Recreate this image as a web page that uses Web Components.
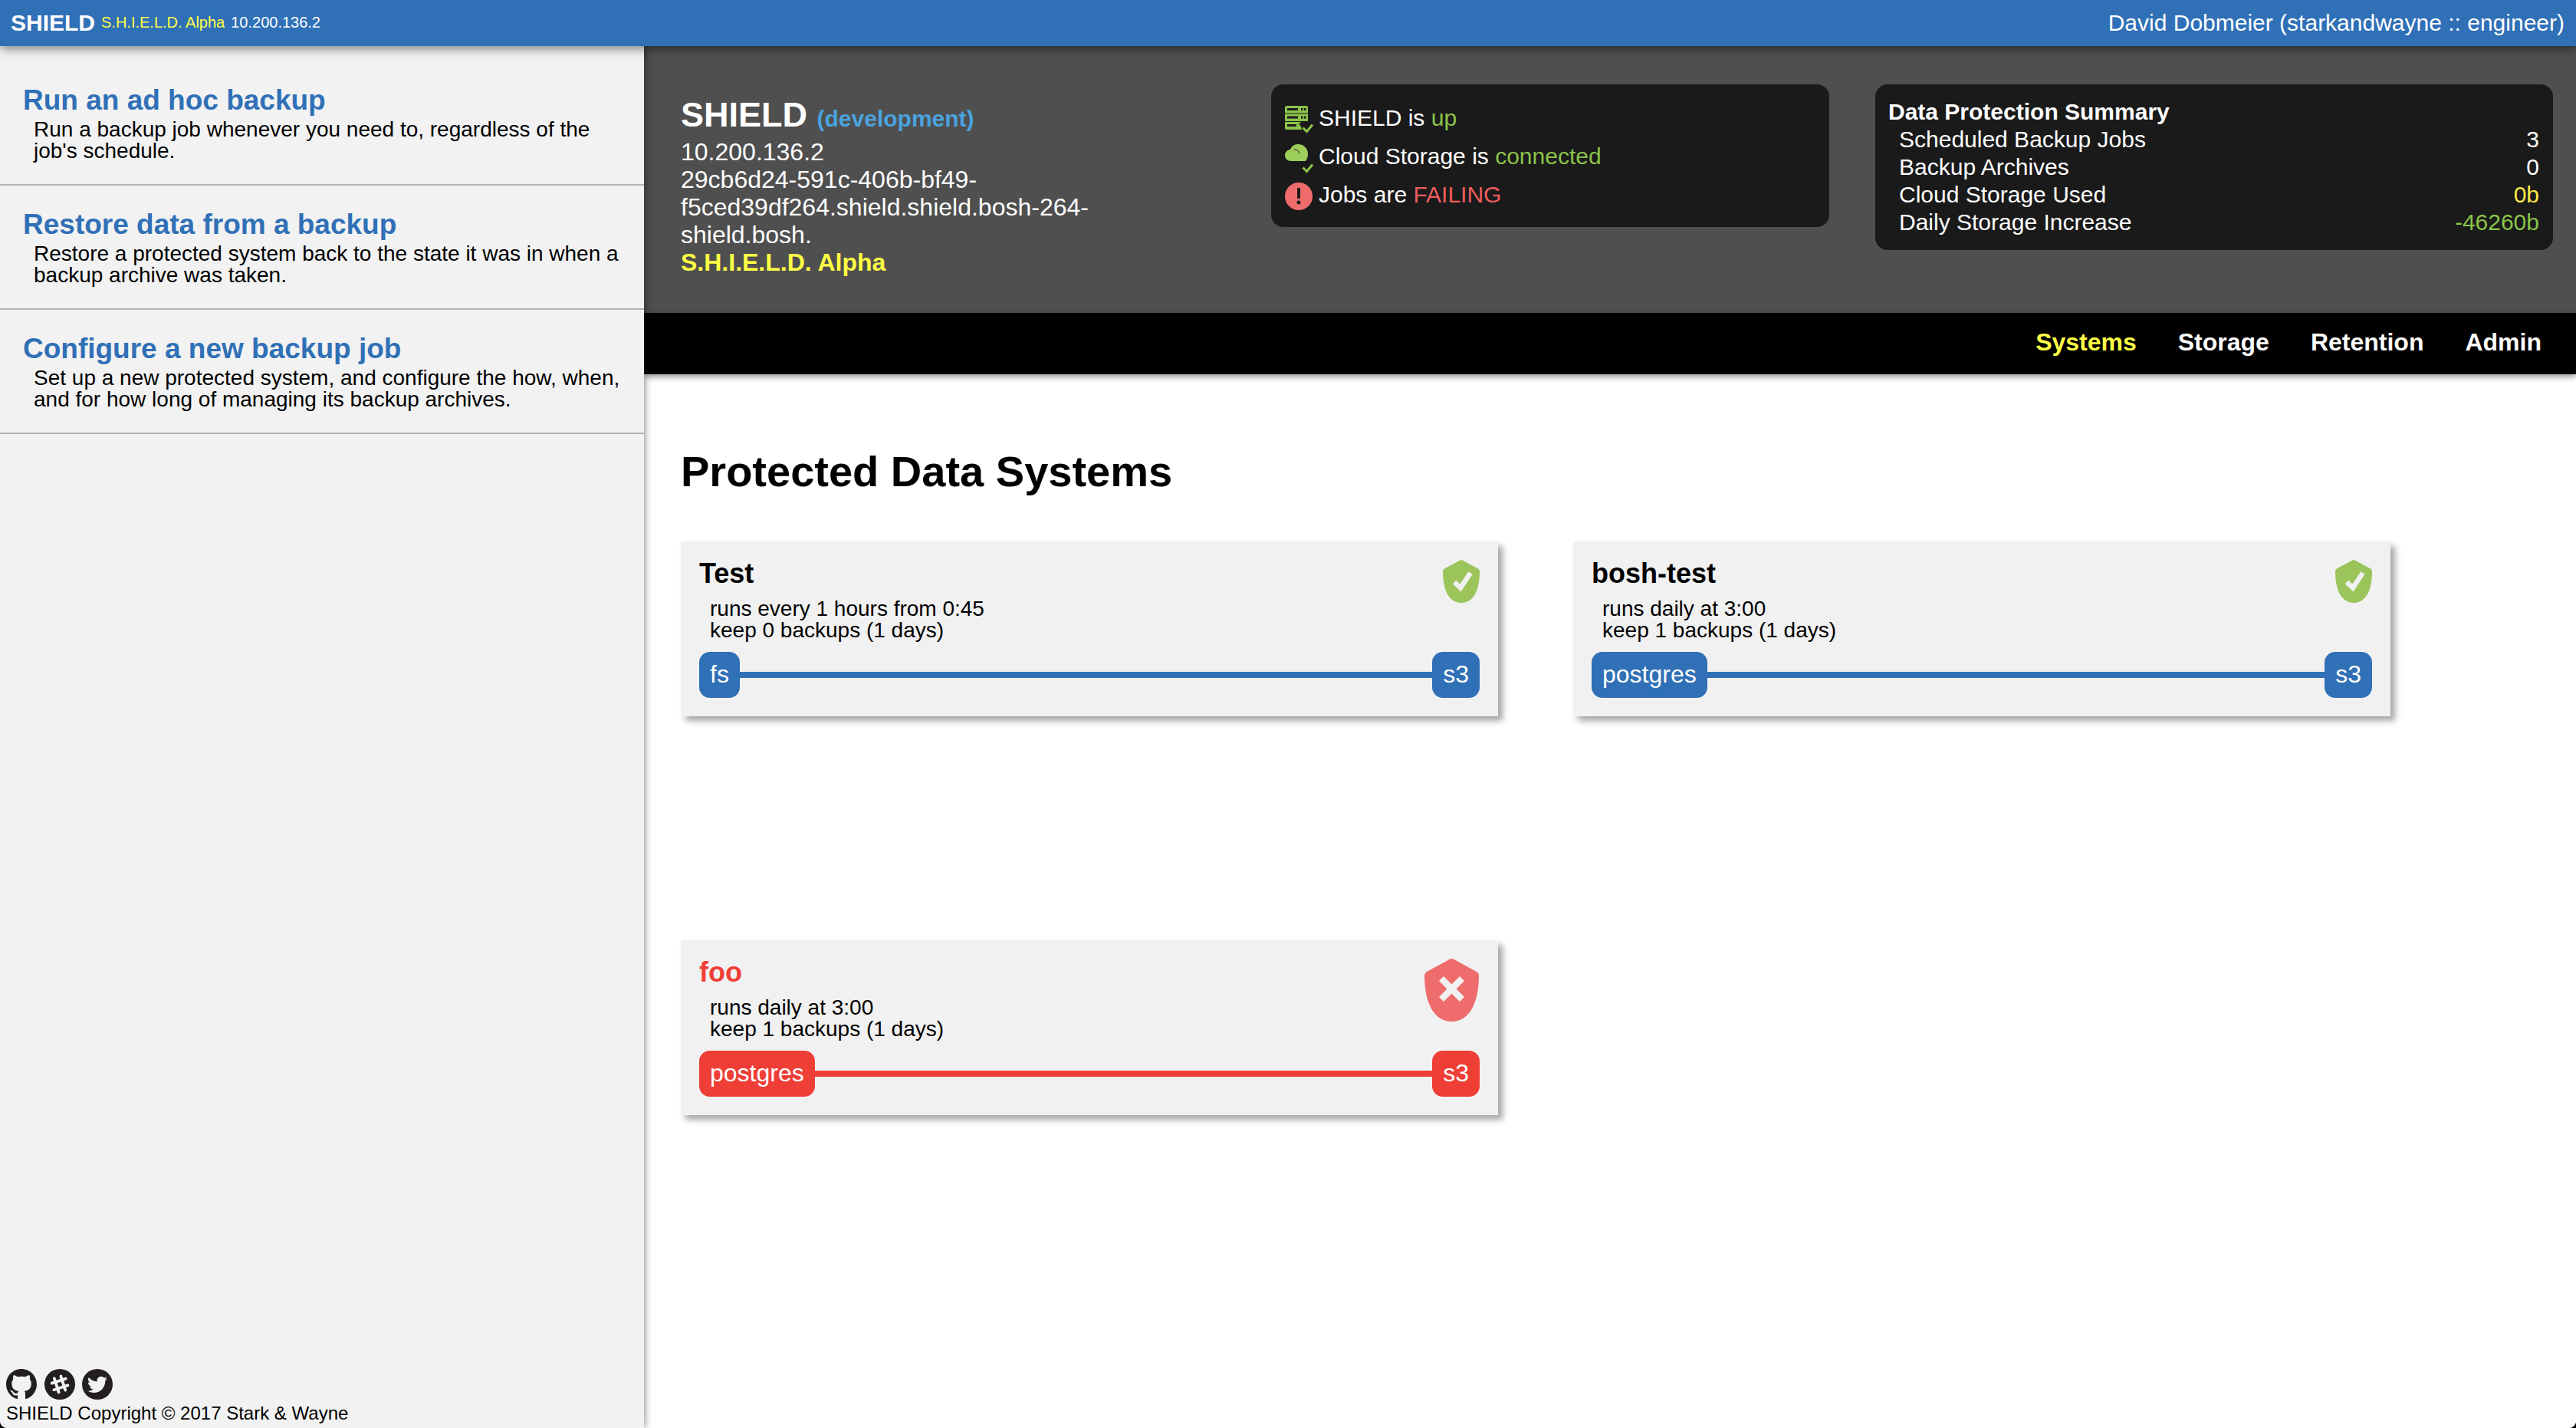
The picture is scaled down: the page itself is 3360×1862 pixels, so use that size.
<!DOCTYPE html>
<html lang="en"><head><meta charset="utf-8"><title>SHIELD</title>
<style>
html,body{margin:0;padding:0;height:1862px;overflow:hidden;background:#000;font-family:"Liberation Sans",Arial,sans-serif;color:#000}
</style></head><body>
<shield-app>
  <top-bar slot="top"></top-bar>
  <side-bar slot="side">
    <side-item heading="Run an ad hoc backup">Run a backup job whenever you need to, regardless of the job's schedule.</side-item>
    <side-item heading="Restore data from a backup">Restore a protected system back to the state it was in when a backup archive was taken.</side-item>
    <side-item heading="Configure a new backup job">Set up a new protected system, and configure the how, when, and for how long of managing its backup archives.</side-item>
  </side-bar>
  <env-header slot="header"></env-header>
  <nav-bar slot="nav"></nav-bar>
  <systems-page slot="main">
    <system-card name="Test" sched="runs every 1 hours from 0:45" keep="keep 0 backups (1 days)" from="fs" to="s3"></system-card>
    <system-card name="bosh-test" sched="runs daily at 3:00" keep="keep 1 backups (1 days)" from="postgres" to="s3"></system-card>
    <system-card name="foo" sched="runs daily at 3:00" keep="keep 1 backups (1 days)" from="postgres" to="s3" failed></system-card>
  </systems-page>
</shield-app>
<script>
function def(name, html){
  customElements.define(name, class extends HTMLElement{
    connectedCallback(){
      if(this.shadowRoot) return;
      const r=this.attachShadow({mode:'open'});
      r.innerHTML=typeof html==='function'?html(this):html;
    }
  });
}
def('shield-app',`<style>
:host{display:grid;grid-template-columns:840px 1fr;grid-template-rows:60px 348px 80px 1374px;width:3360px;height:1862px;position:relative;overflow:hidden;background:#fff;border-radius:0 0 9px 9px}
::slotted([slot=top]){grid-column:1/3;grid-row:1;z-index:3}
::slotted([slot=side]){grid-column:1;grid-row:2/5;z-index:2}
::slotted([slot=header]){grid-column:2;grid-row:2}
::slotted([slot=nav]){grid-column:2;grid-row:3;z-index:1}
::slotted([slot=main]){grid-column:2;grid-row:4}
</style><slot name="top"></slot><slot name="side"></slot><slot name="header"></slot><slot name="nav"></slot><slot name="main"></slot>`);

def('top-bar',`<style>
:host{display:flex;justify-content:space-between;align-items:flex-start;height:60px;background:#3070b7;color:#fff;padding:0 15px 0 14px;box-sizing:border-box;box-shadow:0 4px 12px rgba(0,0,0,.45);position:relative}
.l{display:flex;align-items:flex-start}
b{font-size:30px;line-height:60px}
span{font-size:20px;line-height:58px}
.y{color:#ffff44;margin-left:8px}.ip{margin-left:8px}
.r{font-size:30px;line-height:60px}
</style><div class="l"><b>SHIELD</b><span class="y">S.H.I.E.L.D. Alpha</span><span class="ip">10.200.136.2</span></div><div class="r">David Dobmeier (starkandwayne :: engineer)</div>`);

def('side-bar',`<style>
:host{display:flex;flex-direction:column;background:#f2f2f2;padding-top:20px;box-sizing:border-box;box-shadow:0 0 10px rgba(0,0,0,.55);position:relative}
.grow{flex:1}
</style><slot></slot><div class="grow"></div><app-footer></app-footer>`);

def('side-item',h=>`<style>
:host{display:block;padding:31px 30px 29px;border-bottom:2px solid #b3b3b3}
h3{margin:0 0 4px;font-size:37px;line-height:40px;font-weight:700;color:#3070b7}
p{margin:0 0 0 14px;font-size:28px;line-height:28px}
</style><h3>${h.getAttribute('heading')}</h3><p><slot></slot></p>`);

def('app-footer',`<style>
:host{display:block;padding:0 8px 5px;font-size:24px;line-height:28px}
.i{display:flex;gap:9.5px;height:40px;margin-bottom:4px}
svg{width:40px;height:40px;display:block}
</style><div class="i">
<svg viewBox="0 0 16 16"><path fill="#231f20" d="M8 0C3.58 0 0 3.58 0 8c0 3.54 2.29 6.53 5.47 7.59.4.07.55-.17.55-.38 0-.19-.01-.82-.01-1.49-2.01.37-2.53-.49-2.69-.94-.09-.23-.48-.94-.82-1.13-.28-.15-.68-.52-.01-.53.63-.01 1.08.58 1.23.82.72 1.21 1.87.87 2.33.66.07-.52.28-.87.51-1.07-1.78-.2-3.64-.89-3.64-3.95 0-.87.31-1.59.82-2.15-.08-.2-.36-1.02.08-2.12 0 0 .67-.21 2.2.82.64-.18 1.32-.27 2-.27.68 0 1.36.09 2 .27 1.53-1.04 2.2-.82 2.2-.82.44 1.1.16 1.92.08 2.12.51.56.82 1.27.82 2.15 0 3.07-1.87 3.75-3.65 3.95.29.25.54.73.54 1.48 0 1.07-.01 1.93-.01 2.2 0 .21.15.46.55.38A8.013 8.013 0 0016 8c0-4.42-3.58-8-8-8z"/></svg>
<svg viewBox="0 0 40 40"><circle cx="20" cy="20" r="20" fill="#231f20"/><g stroke="#f2f2f2" stroke-width="3.800" stroke-linecap="round" fill="none" transform="rotate(-18 20 20)"><path d="M15.500 10.500v19M24.500 10.500v19M10.500 15.500h19M10.500 24.500h19"/></g></svg>
<svg viewBox="0 0 40 40"><circle cx="20" cy="20" r="20" fill="#231f20"/><path fill="#f2f2f2" transform="translate(7 7.500) scale(1.08)" d="M23.953 4.57a10 10 0 01-2.825.775 4.958 4.958 0 002.163-2.723c-.951.555-2.005.959-3.127 1.184a4.92 4.92 0 00-8.384 4.482C7.69 8.095 4.067 6.13 1.64 3.162a4.822 4.822 0 00-.666 2.475c0 1.71.87 3.213 2.188 4.096a4.904 4.904 0 01-2.228-.616v.06a4.923 4.923 0 003.946 4.827 4.996 4.996 0 01-2.212.085 4.936 4.936 0 004.604 3.417 9.867 9.867 0 01-6.102 2.105c-.39 0-.779-.023-1.17-.067a13.995 13.995 0 007.557 2.209c9.053 0 13.998-7.496 13.998-13.985 0-.21 0-.42-.015-.63A9.935 9.935 0 0024 4.59z"/></svg>
</div><div>SHIELD Copyright © 2017 Stark &amp; Wayne</div>`);

def('env-header',`<style>
:host{display:grid;grid-template-columns:770px 728px 884px;padding:50px 0 0 48px;box-sizing:border-box;background:#4f4f4f;color:#fff;align-items:start}
.id{margin-top:15px;width:590px;font-size:32px;line-height:36px}
h1{margin:0;font-size:45px;line-height:50px;font-weight:700}
h1 small{font-size:30px;color:#4aa3df}
.a{font-weight:700;color:#ffff44}
summary-box{margin-left:60px}
</style><div class="id"><h1>SHIELD <small>(development)</small></h1><div>10.200.136.2</div><div>29cb6d24-591c-406b-bf49-f5ced39df264.shield.shield.bosh-264-shield.bosh.</div><div class="a">S.H.I.E.L.D. Alpha</div></div>
<status-box></status-box><summary-box></summary-box>`);

const check=(y)=>`<path d="M23.500 ${y+5.500}l5 5 7.500-9" fill="none" stroke="#8bc34a" stroke-width="3"/>`;
def('status-box',`<style>
:host{display:block;width:728px;height:186px;box-sizing:border-box;padding:18px;background:#1a1a1a;border-radius:16px;font-size:30px;line-height:51px;color:#fff}
.r{display:flex;height:50px}
svg{width:44px;height:50px;flex:none;display:block}
.g{color:#8bc34a}.b{color:#ef5d5d}
</style>
<div class="r"><svg viewBox="0 0 44 50"><path fill="#8bc34a" fill-rule="evenodd" d="M2 10h26a2 2 0 012 2v7.500H0V12a2 2 0 012-2zM3 13v3h14v-3zM21 13v3h2.500v-3zM25 13v3h2.500v-3zM0 20.500h30V30H0zM3 23.500v3h14v-3zM21 23.500v3h2.500v-3zM25 23.500v3h2.500v-3zM0 31h21l-1 2-2.500 0 3.500 4 1 4H2a2 2 0 01-2-2zM3 34v3h12v-3z"/>${check(33)}</svg><span>SHIELD is <span class="g">up</span></span></div>
<div class="r"><svg viewBox="0 0 44 50"><path fill="#9ccc5a" d="M8 32C3 32 0 28.500 0 24.500c0-4 3-7 7-7.500 1.500-4 5-7 10-7 7.500 0 13 5.500 13 12.500 0 4-1 7-3 9.500H8z"/><path d="M12 17c3.500 0 6 2 7 5" stroke="#1a1a1a" stroke-width="1" fill="none"/>${check(35)}</svg><span>Cloud Storage is <span class="g">connected</span></span></div>
<div class="r"><svg viewBox="0 0 44 50"><circle cx="18" cy="28" r="18" fill="#ef6c6c"/><rect x="16" y="17" width="4" height="14" rx="1" fill="#1a1a1a"/><circle cx="18" cy="36" r="2.500" fill="#1a1a1a"/></svg><span>Jobs are <span class="b">FAILING</span></span></div>`);

def('summary-box',`<style>
:host{display:block;width:884px;height:216px;box-sizing:border-box;padding:18px 18px 18px 17px;background:#1a1a1a;border-radius:16px;font-size:30px;line-height:36px;color:#fff}
.t{font-weight:700}
.r{display:flex;justify-content:space-between;padding-left:14px}
.y{color:#ffe84a}.g{color:#8bc34a}
</style><div class="t">Data Protection Summary</div>
<div class="r"><span>Scheduled Backup Jobs</span><span>3</span></div>
<div class="r"><span>Backup Archives</span><span>0</span></div>
<div class="r"><span>Cloud Storage Used</span><span class="y">0b</span></div>
<div class="r"><span>Daily Storage Increase</span><span class="g">-46260b</span></div>`);

def('nav-bar',`<style>
:host{display:flex;justify-content:flex-end;gap:54px;height:80px;box-sizing:border-box;padding:0 45px 4px 0;background:#000;color:#fff;font-size:32px;line-height:76px;font-weight:700;box-shadow:0 3px 8px rgba(0,0,0,.45);position:relative}
.on{color:#ffff44}
</style><span class="on">Systems</span><span>Storage</span><span>Retention</span><span>Admin</span>`);

def('systems-page',`<style>
:host{display:block;padding:92px 0 0 48px;background:#fff}
h2{margin:0 0 56px;font-size:56px;line-height:70px;font-weight:700}
.g{display:grid;grid-template-columns:1066px 1066px;column-gap:98px;grid-auto-rows:228px;row-gap:292px}
</style><h2>Protected Data Systems</h2><div class="g"><slot></slot></div>`);

def('system-card',h=>{
 const f=h.hasAttribute('failed');
 const c=f?'#ef3e36':'#3070b7';
 const shield=f?`<svg class="s bad" viewBox="0 0 71 82"><path fill="#ef6c6c" d="M35.500 0Q36.800 0 38 .8L68 17Q71 18.800 71 22C71 55 60 82 35.500 82C11 82 0 55 0 22Q0 18.800 3 17L33 .8Q34.200 0 35.500 0Z"/><path d="M22 26L49 53M49 26L22 53" stroke="#f1f1f1" stroke-width="8.500" fill="none"/></svg>`
 :`<svg class="s" viewBox="0 0 48 56"><path fill="#9bc45b" d="M24 0Q25 0 26 .7L46 11.500Q48 12.800 48 15C48 38 41 56 24 56C7 56 0 38 0 15Q0 12.800 2 11.500L22 .7Q23 0 24 0Z"/><path d="M15 29L23 36.500L36 17" stroke="#f1f1f1" stroke-width="6.500" fill="none"/></svg>`;
 return `<style>
:host{display:block;position:relative;box-sizing:border-box;height:228px;padding:22px 24px 24px;background:#f1f1f1;box-shadow:6px 6px 8px rgba(0,0,0,.35)}
h4{margin:0 0 12px;font-size:36px;line-height:40px;font-weight:700;color:${f?'#ef3e36':'#000'}}
p{margin:0 0 14px 14px;font-size:28px;line-height:28px}
.pipe{display:flex;align-items:center}
.n{height:60px;padding:0 14px;border-radius:14px;background:${c};color:#fff;font-size:32px;line-height:58px}
.l{flex:1;height:8px;background:${c}}
.s{position:absolute;top:24px;right:24px;width:48px;height:56px}
.bad{width:71px;height:82px;right:25px}
</style><h4>${h.getAttribute('name')}</h4><p>${h.getAttribute('sched')}<br>${h.getAttribute('keep')}</p>
<div class="pipe"><span class="n">${h.getAttribute('from')}</span><span class="l"></span><span class="n">${h.getAttribute('to')}</span></div>${shield}`;
});
</script>
</body></html>
